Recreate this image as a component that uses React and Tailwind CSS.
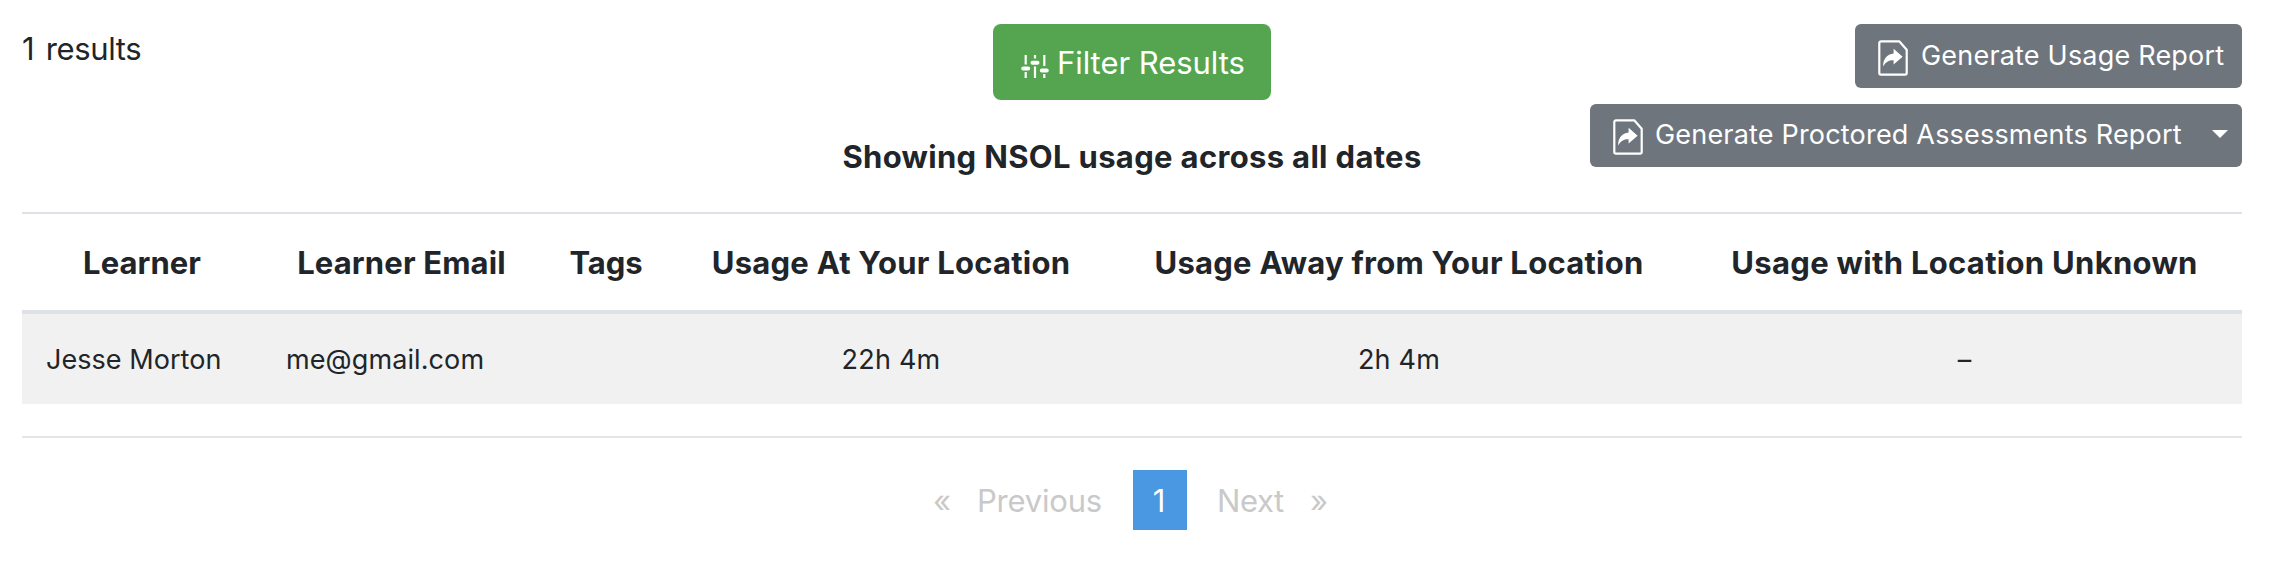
import clsx from "clsx";

const columns = [
  { label: "Learner", width: "w-[240px]", tracking: "tracking-[0.05px]" },
  { label: "Learner Email", width: "w-[279px]", tracking: "tracking-[0.15px]" },
  { label: "Tags", width: "w-[130px]", tracking: "tracking-[-0.1px]" },
  { label: "Usage At Your Location", width: "w-[440px]", tracking: "tracking-[0.25px]" },
  { label: "Usage Away from Your Location", width: "w-[576px]", tracking: "tracking-[0.25px]" },
  { label: "Usage with Location Unknown", width: "w-[555px]", tracking: "tracking-[0.3px]" },
];

const learners = [
  { name: "Jesse Morton", email: "me@gmail.com", tags: "", atLocation: "22h 4m", away: "2h 4m", unknown: "–" },
];

const SlidersIcon = () => (
  <svg width="28" height="23" viewBox="0 0 28 23" className="mt-2 shrink-0" fill="none" stroke="#fff" strokeLinecap="round">
    <path strokeWidth="2.2" strokeLinecap="butt" d="M4.7 0v9.6M4.7 17v6M14 0v3.6M14 11.4V23M23.3 0v11M23.3 19v4" />
    <path strokeWidth="4" d="M2.2 13.5h5M11.5 7.7h5M20.8 15.4h5" />
  </svg>
);

const ReportIcon = ({ className }) => (
  <svg width="30" height="36" viewBox="0 0 30 36" className={clsx("shrink-0", className)}>
    <path
      d="M3 1.3h18.2L28.7 9.8V33a1.7 1.7 0 0 1-1.7 1.7H3A1.7 1.7 0 0 1 1.3 33V3A1.7 1.7 0 0 1 3 1.3Z"
      fill="none"
      stroke="#fff"
      strokeWidth="2.2"
      strokeLinejoin="round"
    />
    <path d="M15.6 8.8 24.6 16.8l-9 7.6v-4.2c-4.6-.1-7.9 1.6-10.4 6.2-.5-7 3.9-12.6 10.4-13Z" fill="#fff" />
  </svg>
);

const App = () => {
  return (
    <div className="h-[586px] w-[2270px] overflow-hidden bg-white px-[22px] pt-6 pr-7 font-['Inter',sans-serif] text-[31px] text-[#212529]">
      {/* Toolbar */}
      <div className="grid h-[188px] grid-cols-[1fr_600px_1fr] items-start whitespace-nowrap">
        <div className="leading-[50px] tracking-[-0.35px] [word-spacing:3px]">1 results</div>

        <div className="flex flex-col items-center">
          <button className="flex h-[76px] w-[278px] items-center rounded-lg bg-[#55a550] pl-7 text-white">
            <SlidersIcon />
            <span className="ml-2 pt-0.5 tracking-[-0.05px]">Filter Results</span>
          </button>
          <h5 className="mt-[33px] font-bold leading-[48px] tracking-[0.33px]">Showing NSOL usage across all dates</h5>
        </div>

        <div className="flex flex-col items-end gap-4 text-[27px] text-white">
          <button className="flex h-16 w-[387px] items-center rounded-md bg-[#6e757d] pl-[23px]">
            <ReportIcon className="mt-1" />
            <span className="ml-[13px] tracking-[0.2px]">Generate Usage Report</span>
          </button>
          <div className="flex h-[63px] w-[652px] items-center rounded-md bg-[#6e757d]">
            <button className="flex flex-1 items-center pl-[23px]">
              <ReportIcon className="mt-[3px]" />
              <span className="ml-3 tracking-[0.19px]">Generate Proctored Assessments Report</span>
            </button>
            <button className="mr-3.5 mb-[3px]">
              <svg width="16" height="8" viewBox="0 0 16 8" fill="#fff">
                <path d="M0 0h16L8 8Z" />
              </svg>
            </button>
          </div>
        </div>
      </div>

      {/* Usage table */}
      <table className="w-[2220px] table-fixed border-separate border-spacing-0 whitespace-nowrap">
        <thead>
          <tr className="h-[102px]">
            {columns.map((col) => (
              <th
                key={col.label}
                className={clsx("border-t-2 border-b-4 border-[#dee2e6] p-0 pt-0.5 text-center font-bold", col.width, col.tracking)}
              >
                {col.label}
              </th>
            ))}
          </tr>
        </thead>
        <tbody className="text-[27px]">
          {learners.map((row) => (
            <tr key={row.email} className="h-[90px] bg-[#f1f1f1]">
              <td className="p-0 pt-0.5 pl-6 tracking-[0.05px]">{row.name}</td>
              <td className="p-0 pt-0.5 pl-6 tracking-[0.1px]">{row.email}</td>
              <td className="p-0">{row.tags}</td>
              <td className="p-0 pt-0.5 text-center tracking-[0.2px]">{row.atLocation}</td>
              <td className="p-0 pt-0.5 text-center tracking-[0.2px]">{row.away}</td>
              <td className="p-0 pt-0.5 text-center">{row.unknown}</td>
            </tr>
          ))}
        </tbody>
      </table>

      <hr className="mt-8 border-t-2 border-[#e5e5e5]" />

      {/* Pagination */}
      <div className="mt-8 flex h-[60px] items-center whitespace-nowrap text-[#c9c9c9]">
        <span className="ml-[911px] w-11 pt-0.5">«</span>
        <span className="w-[156px] pt-0.5 tracking-[-0.2px]">Previous</span>
        <span className="flex h-[60px] w-[54px] items-center justify-center bg-[#4a97e2] pt-0.5 pr-0.5 text-white">1</span>
        <span className="ml-[30px] w-[93px] pt-0.5 tracking-[-0.4px]">Next</span>
        <span className="pt-0.5">»</span>
      </div>
    </div>
  );
};

export default App;
